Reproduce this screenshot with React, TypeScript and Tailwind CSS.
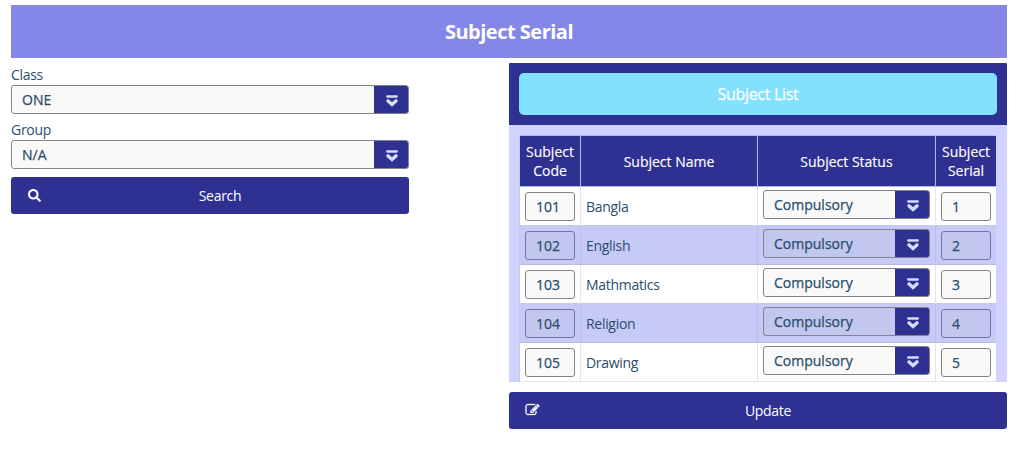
import React from "react";
import { FaSearch } from "react-icons/fa";

const rows = [
  { code: "101", name: "Bangla", serial: "1" },
  { code: "102", name: "English", serial: "2" },
  { code: "103", name: "Mathmatics", serial: "3" },
  { code: "104", name: "Religion", serial: "4" },
  { code: "105", name: "Drawing", serial: "5" },
];

function Select({ value, className }: { value: string; className: string }) {
  return (
    <div className={`flex h-[29px] overflow-hidden rounded-[3px] border border-[#83838b] ${className}`}>
      <span className="flex-1 pl-[10px] leading-[27px] [-webkit-text-stroke:0.25px]">{value}</span>
      <span className="flex w-[34px] items-center justify-center bg-[#2e3092] pl-[2px] pt-[2px]">
        <svg width="12" height="12" viewBox="0 0 12 12" fill="none" stroke="#d3dcfb">
          <path d="M1.2 1.5H10.8" strokeWidth="2.3" strokeLinecap="round" />
          <path d="M2.1 5.9L6 9.4L9.900 5.9" strokeWidth="3.4" strokeLinecap="round" strokeLinejoin="miter" />
        </svg>
      </span>
    </div>
  );
}

function Field({ value, tinted }: { value: string; tinted: boolean }) {
  return (
    <div
      className={`h-[29px] w-full rounded-[3px] border pl-[10px] leading-[28px] [-webkit-text-stroke:0.25px] ${
        tinted ? "border-[#70749f] bg-[#c1c7ef]" : "border-[#83838b] bg-[#f9f9f9]"
      }`}
    >
      {value}
    </div>
  );
}

function EditIcon() {
  return (
    <svg className="-mt-px shrink-0" width="15" height="14" viewBox="0 0 1792 1792" fill="#fff" stroke="#fff" strokeWidth="40">
      <path d="M888 1184l116-116-152-152-116 116v56h96v96h56zm440-720q-16-16-33 1l-350 350q-17 17-1 33t33-1l350-350q17-17 1-33zm80 594v190q0 119-84.500 203.500t-203.500 84.500h-832q-119 0-203.500-84.500t-84.500-203.500v-832q0-119 84.500-203.500t203.500-84.500h832q63 0 117 25 15 7 18 23 3 17-9 29l-49 49q-14 14-32 8-23-6-45-6h-832q-66 0-113 47t-47 113v832q0 66 47 113t113 47h832q66 0 113-47t47-113v-126q0-13 9-22l64-64q15-15 35-7t20 29zm-96-738l288 288-672 672h-288v-288zm444 132l-92 92-288-288 92-92q28-28 68-28t68 28l152 152q28 28 28 68t-28 68z" />
    </svg>
  );
}

function Button({ icon, label }: { icon: React.ReactNode; label: string }) {
  return (
    <button className="flex h-[37px] w-full items-center rounded-[3px] bg-[#2e3092] pl-4 text-white">
      <span className="flex w-[15px] justify-center">{icon}</span>
      <span className="flex-1 pr-[11px] text-center tracking-[-0.3px]">{label}</span>
    </button>
  );
}

export default function App() {
  return (
    <div className="h-[475px] overflow-hidden bg-white pl-[11px] pr-[15px] pt-[5px] font-['Open_Sans',sans-serif] text-[14px] text-[#2b4d6b]">
      <h1 className="h-[53px] bg-[#8587e8] text-center text-[20px] font-bold leading-[53px] tracking-[-0.5px] text-white">
        Subject Serial
      </h1>
      <div className="flex justify-between pt-[5px]">
        <div className="w-[398px]">
          <label className="block h-[22px] pt-px leading-[22px] tracking-[-0.3px]">Class</label>
          <Select value="ONE" className="bg-[#f9f9f9]" />
          <label className="mt-[4px] block h-[22px] pt-px leading-[22px] tracking-[-0.3px]">Group</label>
          <Select value="N/A" className="bg-[#f9f9f9]" />
          <div className="mt-[8px]">
            <Button icon={<FaSearch size={13} />} label="Search" />
          </div>
        </div>
        <div className="w-[498px]">
          <div className="h-[62px] rounded-t-[1px] bg-[#2e3092] p-[10px]">
            <div className="h-[42px] rounded-[5px] bg-[#84e0ff] text-center text-[16px] leading-[42px] tracking-[-0.3px] text-white [-webkit-text-stroke:0.25px]">
              Subject List
            </div>
          </div>
          <div className="h-[257px] overflow-hidden bg-[#d0d2ff] pl-[10px] pt-[10px]">
            <div className="w-[477px] border-l border-[#c7cae6]">
              <div className="grid h-[51px] grid-cols-[61px_177px_178px_60px] border-t border-[#b3b8df] bg-[#2e3092] text-center leading-[19px] text-white [-webkit-text-stroke:0.15px]">
                <div className="flex items-center justify-center border-r border-[#b3b8df]">Subject<br />Code</div>
                <div className="flex items-center justify-center border-r border-[#b3b8df]">Subject Name</div>
                <div className="flex items-center justify-center border-r border-[#b3b8df]">Subject Status</div>
                <div className="flex items-center justify-center">Subject<br />Serial</div>
              </div>
              {rows.map((row, i) => {
                const tinted = i % 2 === 1;
                const line = tinted ? "border-[#b9bee7]" : "border-[#e2e4ee]";
                return (
                  <div
                    key={row.code}
                    className={`grid h-[39px] grid-cols-[61px_177px_178px_60px] border-t ${
                      tinted ? "border-[#c3c7ee] bg-[#c6caf6]" : i === 0 ? "border-[#b3b8df] bg-white" : "border-[#b6bbdf] bg-white"
                    }`}
                  >
                    <div className={`border-r px-[5px] pt-[5px] ${line}`}>
                      <Field value={row.code} tinted={tinted} />
                    </div>
                    <div className={`border-r pl-[5px] pt-px leading-[38px] tracking-[-0.3px] ${line}`}>{row.name}</div>
                    <div className={`border-r px-[5px] pt-[3px] ${line}`}>
                      <Select value="Compulsory" className={tinted ? "bg-[#c1c7ef]" : "bg-[#f9f9f9]"} />
                    </div>
                    <div className="px-[5px] pt-[5px]">
                      <Field value={row.serial} tinted={tinted} />
                    </div>
                  </div>
                );
              })}
              <div className="h-px bg-[#e2e4ee]" />
            </div>
          </div>
          <div className="mt-[10px]">
            <Button icon={<EditIcon />} label="Update" />
          </div>
        </div>
      </div>
    </div>
  );
}
